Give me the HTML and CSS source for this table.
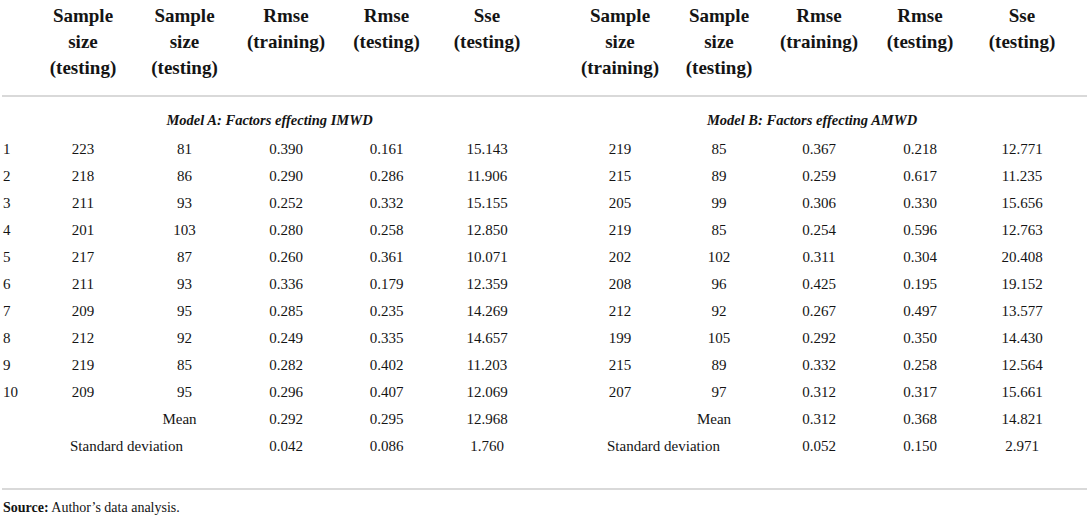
FILE: index.html
```html
<!DOCTYPE html>
<html lang="en">
<head>
  <meta charset="UTF-8" />
  <meta name="viewport" content="width=device-width, initial-scale=1.0" />
  <title>Cross-validation results</title>
  <link rel="stylesheet" href="styles.css">
</head>
<body>
  <div class="table-wrap">
    <table class="results">
      <colgroup>
        <col class="c-idx"><col class="c-n"><col class="c-n2"><col class="c-n"><col class="c-n3"><col class="c-n">
        <col class="c-gap"><col class="c-n"><col class="c-n4"><col class="c-n5"><col class="c-n"><col class="c-last">
      </colgroup>
      <thead>
        <tr>
          <th></th>
          <th>Sample<br>size<br>(testing)</th>
          <th>Sample<br>size<br>(testing)</th>
          <th>Rmse<br>(training)</th>
          <th>Rmse<br>(testing)</th>
          <th>Sse<br>(testing)</th>
          <th></th>
          <th>Sample<br>size<br>(training)</th>
          <th>Sample<br>size<br>(testing)</th>
          <th>Rmse<br>(training)</th>
          <th>Rmse<br>(testing)</th>
          <th class="last">Sse<br>(testing)</th>
        </tr>
      </thead>
      <tbody id="rows">
        <tr class="model-row">
          <td colspan="6">Model A: Factors effecting IMWD</td>
          <td colspan="6">Model B: Factors effecting AMWD</td>
        </tr>
      </tbody>
    </table>
  </div>
  <p class="source"><b>Source:</b> Author’s data analysis.</p>

  <script>
    const data = [
      [1, 223, 81, 0.390, 0.161, 15.143, 219, 85, 0.367, 0.218, 12.771],
      [2, 218, 86, 0.290, 0.286, 11.906, 215, 89, 0.259, 0.617, 11.235],
      [3, 211, 93, 0.252, 0.332, 15.155, 205, 99, 0.306, 0.330, 15.656],
      [4, 201, 103, 0.280, 0.258, 12.850, 219, 85, 0.254, 0.596, 12.763],
      [5, 217, 87, 0.260, 0.361, 10.071, 202, 102, 0.311, 0.304, 20.408],
      [6, 211, 93, 0.336, 0.179, 12.359, 208, 96, 0.425, 0.195, 19.152],
      [7, 209, 95, 0.285, 0.235, 14.269, 212, 92, 0.267, 0.497, 13.577],
      [8, 212, 92, 0.249, 0.335, 14.657, 199, 105, 0.292, 0.350, 14.430],
      [9, 219, 85, 0.282, 0.402, 11.203, 215, 89, 0.332, 0.258, 12.564],
      [10, 209, 95, 0.296, 0.407, 12.069, 207, 97, 0.312, 0.317, 15.661]
    ];
    const mean = [0.292, 0.295, 12.968, 0.312, 0.368, 14.821];
    const sd = [0.042, 0.086, 1.760, 0.052, 0.150, 2.971];

    const tbody = document.getElementById('rows');

    function fmt(v, i) {
      // rmse/sse columns keep three decimals, counts stay whole
      return (i === 3 || i === 4 || i === 5 || i === 8 || i === 9 || i === 10) ? v.toFixed(3) : String(v);
    }

    function addRow(cells, cls) {
      const tr = document.createElement('tr');
      if (cls) tr.className = cls;
      cells.forEach(c => {
        const td = document.createElement('td');
        if (c.span) td.colSpan = c.span;
        if (c.cls) td.className = c.cls;
        td.textContent = c.text;
        tr.appendChild(td);
      });
      tbody.appendChild(tr);
    }

    for (let row of data) {
      const cells = [{ text: row[0], cls: 'idx' }];
      for (let i = 1; i < 6; i++) cells.push({ text: fmt(row[i], i) });
      cells.push({ text: '' });
      for (let i = 6; i < 11; i++) cells.push({ text: fmt(row[i], i), cls: i === 10 ? 'last' : '' });
      addRow(cells);
    }

    addRow([
      { text: '' }, { text: '' }, { text: 'Mean', cls: 'mean' },
      { text: mean[0].toFixed(3) }, { text: mean[1].toFixed(3) }, { text: mean[2].toFixed(3) },
      { text: '' }, { text: '' }, { text: 'Mean', cls: 'mean' },
      { text: mean[3].toFixed(3) }, { text: mean[4].toFixed(3) }, { text: mean[5].toFixed(3), cls: 'last' }
    ]);

    addRow([
      { text: '' }, { text: 'Standard deviation', span: 2, cls: 'sd-label' },
      { text: sd[0].toFixed(3) }, { text: sd[1].toFixed(3) }, { text: sd[2].toFixed(3) },
      { text: '' }, { text: 'Standard deviation', span: 2, cls: 'sd-label' },
      { text: sd[3].toFixed(3) }, { text: sd[4].toFixed(3) }, { text: sd[5].toFixed(3), cls: 'last' }
    ], 'sd-row');
  </script>
</body>
</html>
```

FILE: styles.css
```css
body {
  margin: 0;
  padding: 0;
  background: #fff;
  color: #141414;
  font-family: 'Liberation Serif', 'Times New Roman', serif;
}

.table-wrap {
  margin-left: 2px;
  width: 1085px;
}

.results {
  width: 1085px;
  table-layout: fixed;
  border-collapse: collapse;
}

.c-idx { width: 31px; }
.c-n { width: 100px; }
.c-n2 { width: 103px; }
.c-n3 { width: 101px; }
.c-gap { width: 33px; }
.c-n4 { width: 98px; }
.c-n5 { width: 102px; }
.c-last { width: 117px; }

.results th {
  font-size: 19px;
  font-weight: bold;
  line-height: 26px;
  text-align: center;
  vertical-align: top;
  white-space: nowrap;
  padding: 3px 0 14px;
  border-bottom: 2px solid #d9d9d9;
}

.results td {
  font-size: 15px;
  line-height: 17px;
  text-align: center;
  white-space: nowrap;
  padding: 5px 0;
}

.results .last {
  padding-right: 13px;
}

.results td.idx {
  text-align: left;
  padding-left: 1px;
}

.results td.mean {
  padding-right: 10px;
}

.model-row td {
  font-size: 14.5px;
  font-weight: bold;
  font-style: italic;
  padding: 15px 0 7px;
}

.results td.sd-label {
  text-align: left;
  padding-left: 37px;
}

.sd-row td {
  padding-bottom: 33px;
  border-bottom: 2px solid #d9d9d9;
}

.source {
  margin: 10px 0 0 3px;
  font-size: 14px;
  line-height: 16px;
}
```
